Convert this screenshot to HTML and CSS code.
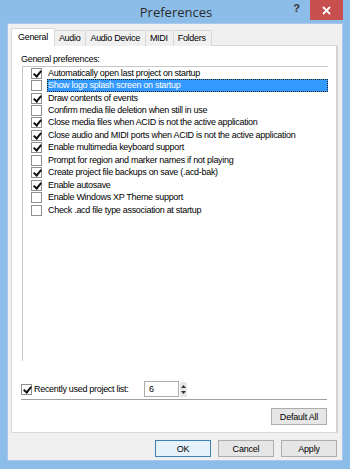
FILE: index.html
```html
<!DOCTYPE html>
<html lang="en">

<head>
    <meta charset="UTF-8">
    <title>Preferences</title>
    <link rel="stylesheet" href="styles.css">
</head>

<body>
    <div class="window">
        <div class="titlebar">
            <span class="title">Preferences</span>
            <span class="help">?</span>
            <span class="close">
                <svg width="9" height="9" viewBox="0 0 9 9">
                    <path d="M1 1L8 8M8 1L1 8" stroke="#fff" stroke-width="1.8" />
                </svg>
            </span>
        </div>
        <div class="client">
            <div class="tabs">
                <div class="tab active">General</div>
                <div class="tab">Audio</div>
                <div class="tab">Audio Device</div>
                <div class="tab">MIDI</div>
                <div class="tab">Folders</div>
            </div>
            <div class="panel">
                <p class="group-label">General preferences:</p>
                <div class="list">
                    <div class="row"><span class="box checked"></span><span class="text">Automatically open last project on startup</span></div>
                    <div class="row selected"><span class="box"></span><span class="text">Show logo splash screen on startup</span></div>
                    <div class="row"><span class="box checked"></span><span class="text">Draw contents of events</span></div>
                    <div class="row"><span class="box"></span><span class="text">Confirm media file deletion when still in use</span></div>
                    <div class="row"><span class="box checked"></span><span class="text">Close media files when ACID is not the active application</span></div>
                    <div class="row"><span class="box checked"></span><span class="text">Close audio and MIDI ports when ACID is not the active application</span></div>
                    <div class="row"><span class="box checked"></span><span class="text">Enable multimedia keyboard support</span></div>
                    <div class="row"><span class="box"></span><span class="text">Prompt for region and marker names if not playing</span></div>
                    <div class="row"><span class="box checked"></span><span class="text">Create project file backups on save (.acd-bak)</span></div>
                    <div class="row"><span class="box checked"></span><span class="text">Enable autosave</span></div>
                    <div class="row"><span class="box"></span><span class="text">Enable Windows XP Theme support</span></div>
                    <div class="row"><span class="box"></span><span class="text">Check .acd file type association at startup</span></div>
                </div>
                <div class="recent">
                    <span class="box checked"></span>
                    <span class="recent-label">Recently used project list:</span>
                    <span class="number">6</span>
                    <span class="spin">
                        <svg width="7" height="15" viewBox="0 0 7 15">
                            <path d="M3.5 3L6 6H1Z M3.5 12L6 9H1Z" fill="#333" />
                        </svg>
                    </span>
                </div>
                <div class="separator"></div>
                <div class="panel-footer">
                    <button class="btn">Default All</button>
                </div>
            </div>
            <div class="dialog-buttons">
                <button class="btn focus">OK</button>
                <button class="btn">Cancel</button>
                <button class="btn">Apply</button>
            </div>
        </div>
    </div>
</body>

</html>
```

FILE: styles.css
```css
* {
    box-sizing: border-box;
    margin: 0;
    padding: 0;
}

body {
    width: 350px;
    height: 469px;
    overflow: hidden;
    font-family: 'Liberation Sans', Arial, sans-serif;
    font-size: 9px;
    letter-spacing: -0.3px;
    color: #000;
}

.window {
    width: 350px;
    height: 469px;
    background-color: #8cbde9;
    display: flex;
    flex-direction: column;
    padding: 0 7px 8px 7px;
}

/* TITLE BAR */
.titlebar {
    height: 23px;
    position: relative;
    display: flex;
    justify-content: center;
    align-items: center;
}

.title {
    font-family: 'Open Sans', 'Noto Sans', sans-serif;
    font-size: 13px;
    letter-spacing: 0;
    color: #2b2b2b;
    padding-left: 2px;
}

.help {
    position: absolute;
    right: 43px;
    top: 2px;
    font-family: 'Liberation Sans', Arial, sans-serif;
    font-weight: bold;
    font-size: 11px;
    letter-spacing: 0;
    color: #333;
}

.close {
    position: absolute;
    right: 0;
    top: 0;
    width: 33px;
    height: 20px;
    background-color: #c7504f;
    display: flex;
    justify-content: center;
    align-items: center;
}

/* CLIENT */
.client {
    flex: 1;
    background-color: #f0f0f0;
    border: 1px solid #a7c8ea;
    display: flex;
    flex-direction: column;
    padding: 4px 4px 0 3px;
}

.tabs {
    display: flex;
    height: 18px;
    align-items: flex-end;
    position: relative;
    z-index: 1;
}

.tab {
    height: 16px;
    padding: 0 5px 0 4px;
    border: 1px solid #d9d9d9;
    border-bottom: none;
    border-left: none;
    background-color: #f0f0f0;
    line-height: 15px;
}

.tab.active {
    height: 18px;
    background-color: #fff;
    border-left: 1px solid #d9d9d9;
    padding: 0 6px 0 6px;
    line-height: 17px;
}

.panel {
    height: 388px;
    margin-top: -1px;
    background-color: #fff;
    border: 1px solid #d9d9d9;
    border-right: 2px solid #d4d4d4;
    display: flex;
    flex-direction: column;
    padding: 8px 8px 0 9px;
}

.group-label {
    line-height: 11px;
    height: 11px;
}

.list {
    height: 295px;
    margin: 1px 0 0 1px;
    border-top: 1px solid #c8c8c8;
    border-left: 1px solid #c8c8c8;
}

.row {
    height: 12.45px;
    display: flex;
    align-items: center;
    white-space: nowrap;
}

.box {
    width: 11px;
    height: 11px;
    border: 1px solid #8e8f8f;
    background-color: #fff;
    margin-left: 8px;
    flex-shrink: 0;
    position: relative;
}

.box.checked::after {
    content: "";
    position: absolute;
    left: 2.5px;
    top: 0px;
    width: 3px;
    height: 6px;
    border-right: 2px solid #111;
    border-bottom: 2px solid #111;
    transform: rotate(40deg);
}

.text {
    margin-left: 6px;
    line-height: 11px;
    flex: 1;
}

.row.selected .text {
    background-color: #3399ff;
    color: #fff;
    border: 1px dotted #222;
    margin-left: 5px;
}

/* RECENT */
.recent {
    margin-top: 20px;
    display: flex;
    align-items: center;
    height: 16px;
}

.recent .box {
    margin-left: 0;
}

.recent-label {
    margin-left: 2px;
    width: 110px;
}

.number {
    width: 35px;
    height: 16px;
    border: 1px solid #adadad;
    padding-left: 4px;
    line-height: 14px;
    background-color: #fff;
}

.spin {
    width: 7px;
    height: 15px;
    margin-left: 1px;
    background-color: #e6e6e6;
    display: flex;
}

.separator {
    height: 2px;
    margin-top: 2px;
    border-top: 1px solid #a0a0a0;
    border-bottom: 1px solid #fff;
    margin-right: 1px;
}

.panel-footer {
    display: flex;
    justify-content: flex-end;
    margin-top: 7px;
    padding-right: 1px;
}

/* BUTTONS */
.btn {
    width: 56px;
    height: 17px;
    font-family: 'Liberation Sans', Arial, sans-serif;
    font-size: 9px;
    letter-spacing: -0.2px;
    color: #000;
    background-color: #e6e6e6;
    border: 1px solid #adadad;
}

.btn.focus {
    border-color: #3c7fb1;
    background-color: #e5f1fb;
    box-shadow: inset 0 0 0 1px #e5f1fb;
}

.dialog-buttons {
    display: flex;
    justify-content: flex-end;
    gap: 7px;
    margin-top: 7px;
    padding-right: 1px;
}
```
